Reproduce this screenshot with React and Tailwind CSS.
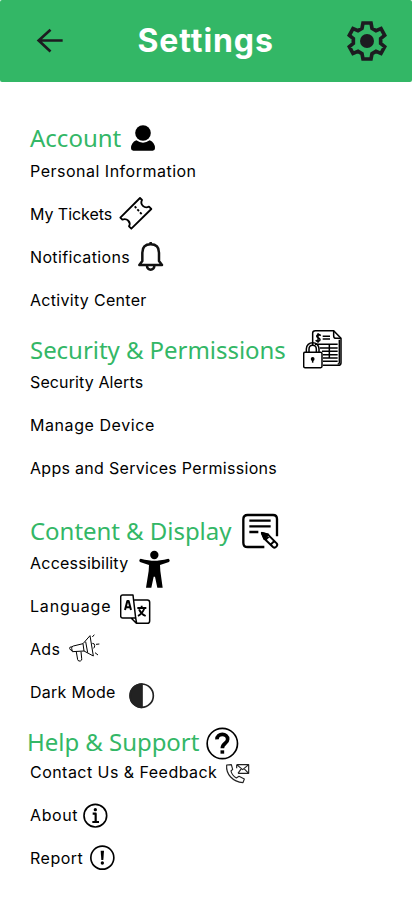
import React from "react";

function Icon({ className, viewBox, children, strokeWidth = 5 }) {
  return (
    <svg
      className={`shrink-0 ${className}`}
      viewBox={viewBox}
      fill="none"
      stroke="currentColor"
      strokeWidth={strokeWidth}
      strokeLinejoin="round"
      aria-hidden="true"
    >
      {children}
    </svg>
  );
}

const ArrowIcon = () => (
  <Icon className="mb-0.5 h-[25px] w-7 text-[#1d1b20]" viewBox="0 0 84 75" strokeWidth={8}>
    <path d="M80 37.500H8M43.500 5 8 37.500l35.500 33" strokeLinejoin="miter" />
  </Icon>
);

const GearIcon = () => (
  <Icon className="size-10 text-[#1d1b20]" viewBox="0 0 120 120" strokeWidth={11}>
    <path
      strokeLinejoin="miter"
      d="M48 6H72L75 22 87 29 102 23 113 43 101 53V67L113 77 102 97 87 91 75 98 72 114H48L45 98 33 91 18 97 7 77 19 67V53L7 43 18 23 33 29 45 22Z"
    />
    <circle cx="60" cy="60" r="21" fill="currentColor" stroke="none" />
  </Icon>
);

const UserIcon = () => (
  <Icon className="mt-[3px] ml-2.5 h-[26px] w-6" viewBox="0 0 72 78">
    <g fill="currentColor" stroke="none">
      <circle cx="36" cy="24" r="23.500" />
      <path d="M16 46Q36 60 56 46Q72 53 72 70Q72 77 65 77H7Q0 77 0 70Q0 53 16 46Z" />
    </g>
  </Icon>
);

const TicketIcon = () => (
  <Icon className="-mt-1.5 ml-[7px] size-[34px]" viewBox="0 0 102 102" strokeWidth={5.5}>
    <path d="M63 6 69 12C62 25 76 39 90 32L97 39 37 98 30 91C37 79 24 65 10 71L4 65Z" />
    <path d="M47 31l5 5M55 40l5 5M63 49l5 5" />
  </Icon>
);

const BellIcon = () => (
  <Icon className="-mt-1 ml-2 h-[31px] w-[26px] text-[#111]" viewBox="0 0 78 93" strokeWidth={7.5}>
    <path d="M4 72H72L63 60V35C63 18 54 10 38 10S13 18 13 35V60Z" />
    <path d="M38 9V3M27 75a11 11 0 0 0 22 0" />
  </Icon>
);

const SecureDocumentIcon = () => (
  <Icon className="-mt-1.5 ml-[17px] h-[41px] w-10" viewBox="0 0 120 123" strokeWidth={4.5}>
    <path d="M29 48V12Q29 5 37 5H92L114 28V102Q114 109 106 109H60" />
    <path d="M92 5V21Q92 28 99 28H114M109 32V101Q109 105 104 105" />
    <path d="M53 20Q49 15 43 18C36 23 50 27 51 31C52 37 43 39 38 34M45 13V41M59 22H81M59 30H81M36 46H104M50 57H104M57 67H104M60 77H104M60 87H104M60 97H104M79 46V88" />
    <path d="M10 70V60C10 48 19 41 29 41S48 48 48 60V70M18 70V61C18 53 23 49 29 49S40 53 40 61V70" />
    <rect x="2" y="70" width="55" height="46" rx="4" />
    <circle cx="29" cy="90" r="3.500" fill="currentColor" />
    <path d="M29 91V101" />
  </Icon>
);

const NoteIcon = () => (
  <Icon className="-mt-[3px] ml-[11px] h-9 w-[37px]" viewBox="0 0 111 108" strokeWidth={7}>
    <path d="M67 102H17Q4 102 4 89V19Q4 6 17 6H93Q105 6 105 18V70" />
    <path d="M22 23H86M22 40H86M22 57H49" />
    <path d="M60 60 78 65 104 91Q108 96 103 101T93 102L68 78ZM71 80 81 70M86 95 97 84" strokeWidth={6} />
    <path d="M60 60 78 65 67 77Z" fill="currentColor" />
  </Icon>
);

const AccessibilityIcon = () => (
  <Icon className="-mt-px ml-[11px] h-[38px] w-[31px]" viewBox="0 0 93 114">
    <g fill="currentColor" stroke="none">
      <circle cx="46" cy="15" r="12.500" />
      <path d="M5 26Q31 32 46 32T88 26Q95 30 90 36L63 45 64 63 71 113H55L48 80H44L37 113H21L29 63 30 45 3 36Q-2 30 5 26Z" />
    </g>
  </Icon>
);

const TranslateIcon = () => (
  <Icon className="ml-[9px] size-[31px]" viewBox="0 0 93 93" strokeWidth={4.5}>
    <path d="M39 3H8Q2 3 2 9V66Q2 72 8 72H47L39 3ZM43 18H82Q89 18 89 25V81Q89 88 82 88H50L47 72M34 73 49 88" />
    <path d="M15 48 22 21H26L33 48M17 40H31" strokeWidth={6} />
    <path d="M52 42H79M65 35V42M73 43Q68 59 54 66M57 46Q63 60 77 66" strokeWidth={5.5} />
  </Icon>
);

const MegaphoneIcon = () => (
  <Icon className="-mt-1 ml-[9px] size-[31px]" viewBox="0 0 93 93" strokeWidth={3}>
    <path d="M42 32 63 8 73 69 45 54ZM42 32 13 39Q7 40 8 46L10 56 45 54M8 41Q0 42 2 47T10 53M50 26 56 59M70 31Q77 31 77 37T74 46" />
    <path d="M22 57 26 80Q28 86 34 84T38 76L36 56M70 12 76 5M81 34 91 33M78 59 87 66" />
  </Icon>
);

const ContrastIcon = () => (
  <Icon className="mt-[3px] ml-[13px] size-[26px] text-[#222]" viewBox="0 0 78 78">
    <circle cx="38" cy="38" r="35" />
    <path d="M39 3A35 35 0 0 0 39 73Z" fill="currentColor" />
  </Icon>
);

const HelpIcon = () => (
  <Icon className="ml-[7px] size-[33px]" viewBox="0 0 99 99">
    <circle cx="49" cy="49.500" r="45.500" />
    <path d="M33 37C32 17 66 17 65 37C65 50 49 48 49 64" strokeWidth={11} />
    <rect x="43.500" y="70" width="11" height="10" fill="currentColor" stroke="none" />
  </Icon>
);

const ContactIcon = () => (
  <Icon className="mt-[3px] ml-2 h-[22px] w-[26px] text-[#222]" viewBox="0 0 78 66" strokeWidth={3.5}>
    <path d="M35 5H71V31H39M35 5V16M35 5 53 20 71 5M39 31 49 17M71 31 57 17" />
    <path d="M5 6Q3 27 17 42T54 59L58 48 42 40 34 45Q21 38 18 24L23 19 19 5Z" />
  </Icon>
);

const InfoIcon = () => (
  <Icon className="ml-[5px] size-[26px]" viewBox="0 0 78 78">
    <circle cx="37" cy="38" r="34" />
    <circle cx="37" cy="20" r="5" fill="currentColor" stroke="none" />
    <path d="M29 32H38V57M28 57H48" strokeWidth={6.5} />
  </Icon>
);

const AlertIcon = () => (
  <Icon className="-mt-px ml-[7px] size-[26px]" viewBox="0 0 78 78">
    <circle cx="37" cy="38" r="34.500" />
    <path d="M32 17H42L40 45H34Z" fill="currentColor" stroke="none" />
    <circle cx="37" cy="54" r="5" fill="currentColor" stroke="none" />
  </Icon>
);

function Heading({ children, icon, className, textClass = "-mt-px tracking-[-0.045px]" }) {
  return (
    <div className={`flex items-start ${className}`}>
      <h2 className={`text-2xl leading-8 font-normal whitespace-nowrap text-[#33b766] ${textClass}`}>{children}</h2>
      {icon}
    </div>
  );
}

function Row({ children, icon, className }) {
  return (
    <li className="flex h-[43px] items-start">
      <span className={`shrink-0 font-['Inter',sans-serif] text-base leading-6 whitespace-nowrap ${className}`}>
        {children}
      </span>
      {icon}
    </li>
  );
}

export default function App() {
  return (
    <div className="flex min-h-[917px] w-full flex-col bg-white font-['Noto_Sans',sans-serif] text-black">
      <header className="flex h-[82px] items-center justify-between rounded-xs bg-[#33b766] pr-[25px] pl-9">
        <ArrowIcon />
        <h1 className="w-[136px] font-['Inter',sans-serif] text-[32px] font-bold tracking-[0.9px] whitespace-nowrap text-white">
          Settings
        </h1>
        <GearIcon />
      </header>
      <main className="flex flex-col pt-10 pl-[30px]">
        <section>
          <Heading className="h-[37px]" textClass="" icon={<UserIcon />}>Account</Heading>
          <ul>
            <Row className="w-[166px] tracking-[0.5px]">Personal Information</Row>
            <Row className="w-[82px] tracking-[-0.05px]" icon={<TicketIcon />}>My Tickets</Row>
            <Row className="w-[100px] tracking-[0.36px]" icon={<BellIcon />}>Notifications</Row>
            <Row className="w-[116px] tracking-[0.3px]">Activity Center</Row>
          </ul>
        </section>
        <section className="mt-1">
          <Heading className="h-[35px]" icon={<SecureDocumentIcon />}>Security &amp; Permissions</Heading>
          <ul>
            <Row className="w-[113px] tracking-[0.12px]">Security Alerts</Row>
            <Row className="w-[124px] tracking-[0.57px]">Manage Device</Row>
            <Row className="w-[246px] tracking-[0.3px]">Apps and Services Permissions</Row>
          </ul>
        </section>
        <section className="mt-[17px]">
          <Heading className="h-[35px]" icon={<NoteIcon />}>Content &amp; Display</Heading>
          <ul>
            <Row className="w-[98px] tracking-[0.23px]" icon={<AccessibilityIcon />}>Accessibility</Row>
            <Row className="w-[81px] tracking-[0.8px]" icon={<TranslateIcon />}>Language</Row>
            <Row className="w-[30px] tracking-[0.3px]" icon={<MegaphoneIcon />}>Ads</Row>
            <Row className="w-[86px] tracking-[0.27px]" icon={<ContrastIcon />}>Dark Mode</Row>
          </ul>
        </section>
        <section className="mt-1">
          <Heading className="-ml-[3px] h-[33px]" icon={<HelpIcon />}>Help &amp; Support</Heading>
          <ul>
            <Row className="w-[187px] tracking-[0.46px]" icon={<ContactIcon />}>Contact Us &amp; Feedback</Row>
            <Row className="w-12 tracking-[0.6px]" icon={<InfoIcon />}>About</Row>
            <Row className="w-[53px] tracking-[0.5px]" icon={<AlertIcon />}>Report</Row>
          </ul>
        </section>
      </main>
    </div>
  );
}
